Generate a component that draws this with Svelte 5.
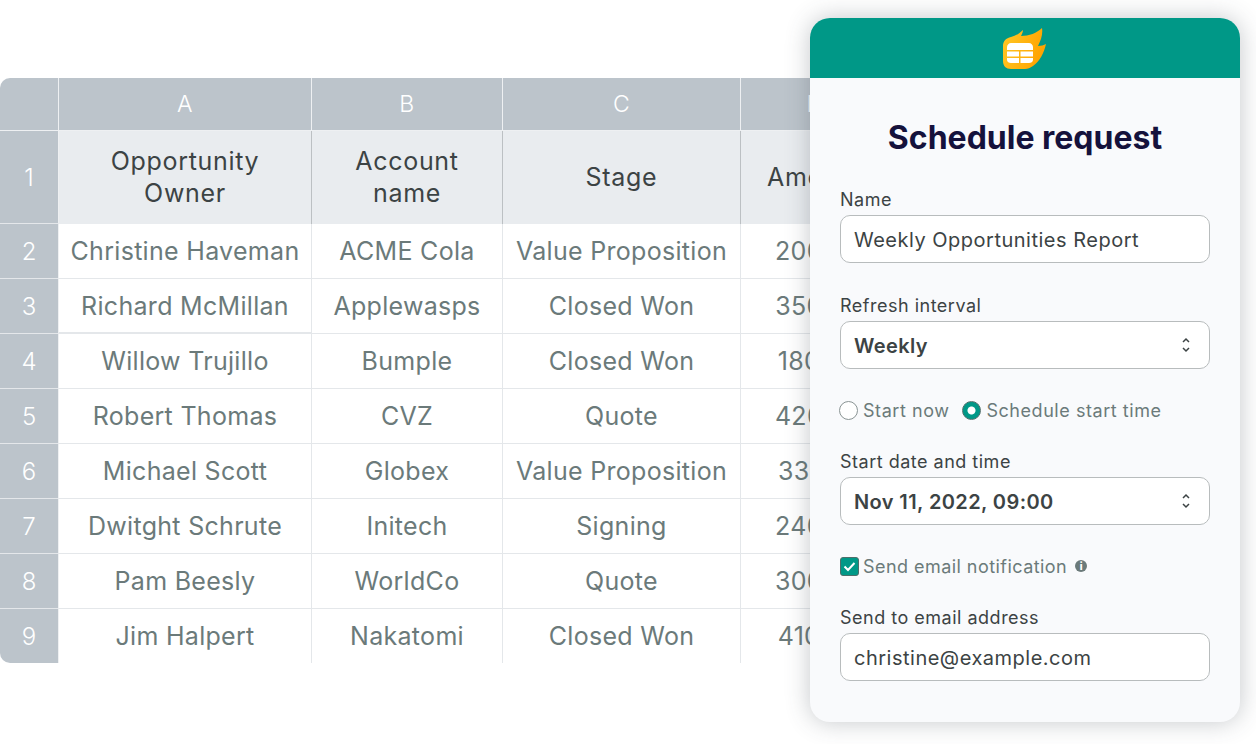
<script>
  const columns = ["A", "B", "C", "D"];
  const headers = ["Opportunity Owner", "Account name", "Stage", "Amount"];
  const rows = [
    ["Christine Haveman", "ACME Cola", "Value Proposition", "20000"],
    ["Richard McMillan", "Applewasps", "Closed Won", "35000"],
    ["Willow Trujillo", "Bumple", "Closed Won", "18000"],
    ["Robert Thomas", "CVZ", "Quote", "42000"],
    ["Michael Scott", "Globex", "Value Proposition", "33100"],
    ["Dwitght Schrute", "Initech", "Signing", "24000"],
    ["Pam Beesly", "WorldCo", "Quote", "30000"],
    ["Jim Halpert", "Nakatomi", "Closed Won", "41000"],
  ];
</script>

<div class="page">
  <div class="sheet">
    <div class="row col-row">
      <div class="corner"></div>
      {#each columns as c}
        <div class="col-head">{c}</div>
      {/each}
    </div>
    <div class="row head-row">
      <div class="num">1</div>
      {#each headers as h}
        <div class="head-cell">{h}</div>
      {/each}
    </div>
    {#each rows as r, i}
      <div class="row body-row">
        <div class="num">{i + 2}</div>
        {#each r as v}
          <div class="cell">{v}</div>
        {/each}
      </div>
    {/each}
  </div>

  <div class="panel">
    <div class="panel-top">
      <svg width="44" height="42" viewBox="0 0 44 42">
        <defs>
          <linearGradient id="flame" x1="0" y1="0" x2="1" y2="0.3">
            <stop offset="0" stop-color="#ffc926" />
            <stop offset="1" stop-color="#ffa300" />
          </linearGradient>
        </defs>
        <path d="M0 18C0 13 3 10 8 9 12 8 16 6 20 2 20 4 19 6 18 8 26 8 34 5 39 0 40 6 38 12 35 18 38 18 41 17 43 16 41 25 37 33 30 38 27 40 25 41 22 41H8C3 41 0 38 0 33Z" fill="url(#flame)" />
        <path d="M4 19c0-2 2-4 4-4h18c2 0 4 2 4 4v3H4zM4 23.500h12v5H4zM17.500 23.500H30v5H17.500zM4 30h12v5H8c-2 0-4-1-4-3zM17.500 30H30v2c0 2-2 3-4 3h-8.500z" fill="#fff" />
      </svg>
    </div>
    <div class="panel-body">
      <h1>Schedule request</h1>

      <div class="label">Name</div>
      <div class="field">Weekly Opportunities Report</div>

      <div class="label refresh">Refresh interval</div>
      <div class="field select">
        Weekly
        <svg width="10" height="18" viewBox="0 0 10 18"><path d="M2 6l3-3 3 3M2 12l3 3 3-3" fill="none" stroke="#3c4344" stroke-width="1.500" /></svg>
      </div>

      <div class="radios">
        <span class="radio"></span><span class="opt">Start now</span>
        <span class="radio on"></span><span class="opt">Schedule start time</span>
      </div>

      <div class="label">Start date and time</div>
      <div class="field select">
        Nov 11, 2022, 09:00
        <svg width="10" height="18" viewBox="0 0 10 18"><path d="M2 6l3-3 3 3M2 12l3 3 3-3" fill="none" stroke="#3c4344" stroke-width="1.500" /></svg>
      </div>

      <div class="check-row">
        <span class="check">
          <svg width="17" height="17" viewBox="0 0 17 17"><path d="M3.500 8.500l3.500 3.500 6.500-7" fill="none" stroke="#fff" stroke-width="2" /></svg>
        </span>
        <span class="opt notify">Send email notification</span>
        <span class="info">i</span>
      </div>

      <div class="label">Send to email address</div>
      <div class="field">christine@example.com</div>
    </div>
  </div>
</div>

<style>
  :global(body) {
    margin: 0;
    background: #fff;
  }

  .page {
    position: relative;
    width: 1256px;
    height: 744px;
    overflow: hidden;
    padding-top: 78px;
    box-sizing: border-box;
    font-family: Inter, "Liberation Sans", sans-serif;
  }

  /* spreadsheet */
  .sheet {
    width: 890px;
    border-radius: 10px 0 0 10px;
    overflow: hidden;
  }
  .row {
    display: grid;
    grid-template-columns: 59px 253px 191px 238px 149px;
  }
  .col-row { height: 53px; }
  .head-row { height: 93px; }
  .body-row { height: 55px; }
  .body-row:last-child { height: 54px; }

  .corner, .col-head {
    background: #bcc4cb;
    border-right: 1px solid #eef0f2;
    border-bottom: 1px solid #eef0f2;
    box-sizing: border-box;
  }
  .col-head {
    display: flex;
    align-items: center;
    justify-content: center;
    color: #fff;
    font-size: 23px;
    font-weight: 300;
    letter-spacing: 0.4px;
  }
  .num {
    display: flex;
    align-items: center;
    justify-content: center;
    background: #bcc4cb;
    color: #fff;
    font-size: 24px;
    font-weight: 300;
    box-sizing: border-box;
    border-right: 1px solid #eef0f2;
    border-bottom: 1px solid #e4e7ea;
  }
  .head-cell {
    display: flex;
    align-items: center;
    justify-content: center;
    text-align: center;
    padding: 0 40px 2px;
    background: #e9ecef;
    color: #3c4344;
    font-size: 25px;
    font-weight: 400;
    letter-spacing: 0.7px;
    line-height: 32px;
    box-sizing: border-box;
    border-right: 1px solid #bcc0c3;
  }
  .cell {
    display: flex;
    align-items: center;
    justify-content: center;
    color: #6b7a7a;
    font-size: 25px;
    letter-spacing: 0.3px;
    white-space: nowrap;
    box-sizing: border-box;
    border-right: 1px solid #e4e7ea;
    border-bottom: 1px solid #e4e7ea;
  }
  .body-row:nth-child(4) .cell:nth-child(2) { border-bottom-width: 2px; }
  .body-row:last-child .cell, .body-row:last-child .num { border-bottom: 0; }

  /* schedule panel */
  .panel {
    position: absolute;
    left: 810px;
    top: 18px;
    width: 430px;
    height: 704px;
    border-radius: 20px;
    overflow: hidden;
    background: #f9fafc;
    box-shadow: 0 0 24px rgba(60, 70, 80, 0.3);
  }
  .panel-top {
    height: 60px;
    background: #009887;
    display: flex;
    justify-content: center;
    padding-top: 10px;
    box-sizing: border-box;
  }
  .panel-top svg {
    flex: none;
    margin-left: -1px;
  }
  .panel-body {
    padding: 0 30px;
  }
  h1 {
    margin: 39px 0 30px;
    text-align: center;
    font-size: 32px;
    line-height: 42px;
    font-weight: 700;
    color: #15123c;
  }
  .label {
    color: #3c4344;
    font-size: 18px;
    font-weight: 400;
    letter-spacing: 0.5px;
    line-height: 22px;
    margin-bottom: 4px;
  }
  .refresh { margin-top: 32px; }
  .field {
    display: flex;
    align-items: center;
    justify-content: space-between;
    height: 48px;
    box-sizing: border-box;
    padding: 2px 18px 0 13px;
    background: #fff;
    border: 1px solid #b8bcbd;
    border-radius: 10px;
    color: #3c4344;
    font-size: 20px;
    letter-spacing: 0.5px;
  }
  .select { font-weight: 600; letter-spacing: 0.4px; }
  .select svg { margin-top: -2px; }
  .radios {
    display: flex;
    align-items: center;
    margin: 30px 0 30px -1px;
    height: 22px;
  }
  .radio {
    width: 19px;
    height: 19px;
    box-sizing: border-box;
    margin-right: 5px;
    border: 1px solid #8a9494;
    border-radius: 50%;
    background: #fff;
  }
  .radio.on {
    margin-left: 13px;
    margin-right: 5px;
    background: radial-gradient(circle, #fff 3.500px, #009887 4.500px);
    border-color: #4f6e6a;
  }
  .opt {
    color: #6b7a7a;
    font-size: 18px;
    letter-spacing: 0.55px;
  }
  .check-row {
    display: flex;
    align-items: center;
    margin: 30px 0 30px;
    height: 22px;
  }
  .check {
    width: 19px;
    height: 19px;
    box-sizing: border-box;
    margin-right: 4px;
    background: #009887;
    border: 1px solid #4f6e6a;
    border-radius: 3px;
    display: flex;
    align-items: center;
    justify-content: center;
  }
  .notify { letter-spacing: 0.45px; }
  .info {
    width: 12px;
    height: 12px;
    margin-left: 8px;
    border-radius: 50%;
    background: #6b7a7a;
    color: #fff;
    font-size: 10px;
    font-weight: 800;
    line-height: 12px;
    text-align: center;
  }
</style>
